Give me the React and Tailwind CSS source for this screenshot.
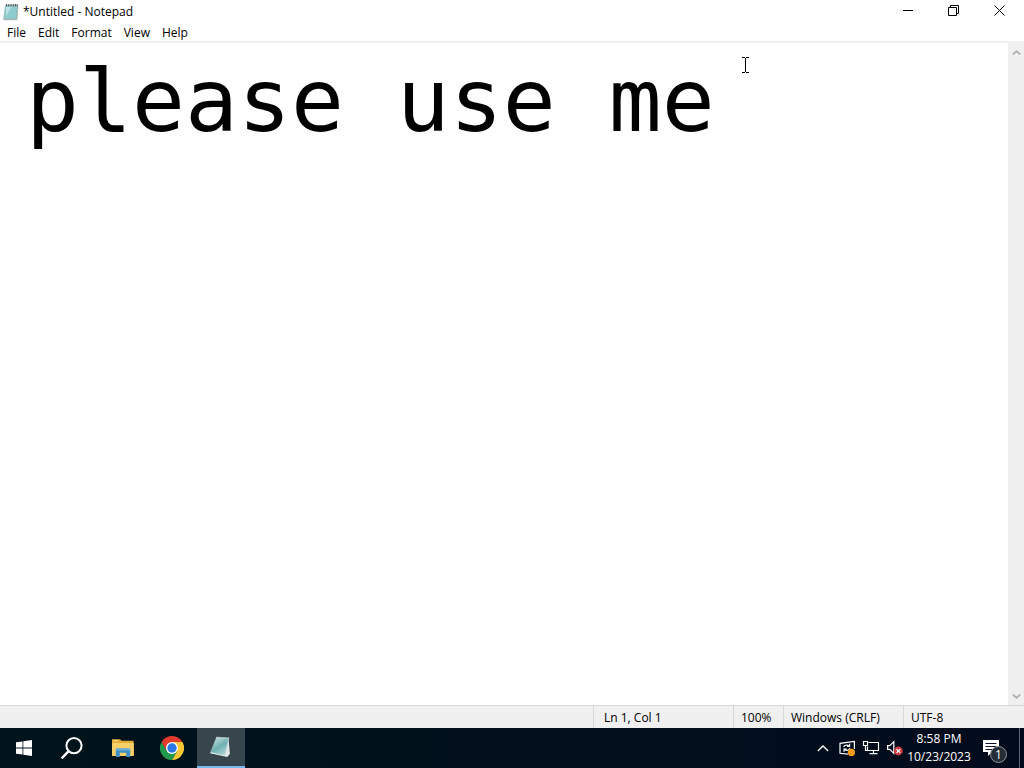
import { useState } from "react";

function NotepadIcon() {
  return (
    <svg className="block h-[18px] w-4" viewBox="0 0 16 18" aria-hidden="true">
      <path d="M2.4 2.5h12.1l-1 13.8H.8z" fill="#9fd0d2" stroke="#6f9ba0" strokeWidth=".6" />
      <path d="M2.8 4h11l-1 11H1.6z" fill="#8ecbcf" />
      <path d="M3 4h5.600L3 13z" fill="#b9e2e2" />
      <path d="M14.5 3l.6.6-1 13.2H1.2l-.4-.6h12.5z" fill="#d6e3e3" stroke="#7f9494" strokeWidth=".4" />
      <path d="M3.5 1v2.4M5.3 1v2.4M7.1 1v2.4M8.900 1v2.4M10.7 1v2.4M12.5 1v2.4M14.2 1v2.4" stroke="#4a5558" strokeWidth=".9" />
    </svg>
  );
}

function StartIcon() {
  return (
    <svg className="block size-4" viewBox="0 0 16 16" fill="#fff" aria-hidden="true">
      <path d="M0 2.3l6.5-.9v6.1H0zM7.3 1.2L16 0v7.5H7.3zM0 8.4h6.5v6.2L0 13.7zM7.3 8.4H16V16l-8.7-1.2z" />
    </svg>
  );
}

function SearchIcon() {
  return (
    <svg className="block size-6" viewBox="0 0 24 24" fill="none" stroke="#fff" strokeWidth="2" aria-hidden="true">
      <circle cx="14" cy="9.6" r="7.6" />
      <path d="M8.7 15.2L1.6 22.3" strokeWidth="2.4" />
    </svg>
  );
}

function FolderIcon() {
  return (
    <svg className="block h-5 w-[22px]" viewBox="0 0 22 20" aria-hidden="true">
      <path d="M0 1.2h8l1.4 1.6H21a.6.6 0 0 1 .6.6V17H0z" fill="#e6ad35" />
      <path d="M1.6 2.2h4.2v1H1.6z" fill="#f7e3a0" />
      <path d="M0 5h21.8v12.4a.6.6 0 0 1-.6.6H.6a.6.6 0 0 1-.6-.6z" fill="#f5cf69" />
      <path d="M5 10.4h12a1.2 1.2 0 0 1 1.2 1.2V19h-4v-4.2H7.8V19h-4v-7.4A1.2 1.2 0 0 1 5 10.4z" fill="#3f8fc6" />
      <path d="M5 10.4h12a1.2 1.2 0 0 1 1.2 1.2v.8H3.8v-.8A1.2 1.2 0 0 1 5 10.4z" fill="#6bb2dd" />
    </svg>
  );
}

function ChromeIcon() {
  return (
    <svg className="block size-6" viewBox="0 0 48 48" aria-hidden="true">
      <path d="M24 12H44.8A24 24 0 0 1 24 48L34.4 30z" fill="#fcc934" />
      <path d="M13.6 30L3.2 12A24 24 0 0 0 24 48L34.4 30z" fill="#219a4c" />
      <path d="M24 12h20.8A24 24 0 0 0 3.2 12l10.4 18z" fill="#e33b2e" />
      <circle cx="24" cy="24" r="12" fill="#fff" />
      <circle cx="24" cy="24" r="9.4" fill="#2b78e4" />
    </svg>
  );
}

function NotepadLargeIcon() {
  return (
    <svg className="block h-[22px] w-6" viewBox="0 0 24 22" aria-hidden="true">
      <defs>
        <linearGradient id="cover" x1=".2" y1="0" x2=".8" y2="1">
          <stop offset="0" stopColor="#c3dfdf" />
          <stop offset=".5" stopColor="#6fb0b2" />
          <stop offset="1" stopColor="#b5dcdc" />
        </linearGradient>
      </defs>
      <path d="M19.5 2l1.4 16-2.4 2.6-5-1z" fill="#dfe7e7" />
      <path d="M7.5 1.6l12.3.6-4.4 17.4L1.6 16.4z" fill="url(#cover)" stroke="#a9c8ca" strokeWidth=".6" />
      <path d="M1.6 16.2l13.8 3.2 3.4.8-.4.8L1.2 17.3z" fill="#eef5f5" />
      <path d="M7.5 1.4l12.6.6" stroke="#dfe7e7" strokeWidth="1.4" strokeDasharray="1 1" />
    </svg>
  );
}

function UpdateIcon() {
  return (
    <svg className="block size-[18px]" viewBox="0 0 18 18" fill="none" stroke="#fff" strokeWidth="1.2" aria-hidden="true">
      <path d="M10 15.2L2 14.3v-10L16.4 2.4V10" />
      <path d="M5.7 8.2c.4-2 3.4-2.8 5.3-1.2M11.6 4.8v2.5H9M11.9 9.2c-.5 2.1-3.4 3-5.3 1.3M6 12.8v-2.6h2.6" />
      <circle cx="13.4" cy="13.4" r="3.6" fill="#f39a1d" stroke="none" />
    </svg>
  );
}

function NetworkIcon() {
  return (
    <svg className="block size-[18px]" viewBox="0 0 18 18" fill="none" stroke="#fff" strokeWidth="1.2" aria-hidden="true">
      <path d="M6.5 3.5h10v8h-11v-4" />
      <path d="M1.5 2.5h4v4h-4zM3.5 6.5v5H6M11.500 11.500v3M7.500 14.600h8" />
    </svg>
  );
}

function VolumeIcon() {
  return (
    <svg className="block size-[18px]" viewBox="0 0 18 18" fill="none" stroke="#fff" strokeWidth="1.2" aria-hidden="true">
      <path d="M1.6 6.6h2.2l4-4v11.8l-4-4H1.6z" />
      <circle cx="12.4" cy="12" r="4.4" fill="#cf3d43" stroke="none" />
      <path d="M10.5 10.1l3.8 3.8M14.3 10.1l-3.8 3.8" strokeWidth="1.3" />
    </svg>
  );
}

function Chevron({ className, d }) {
  return (
    <svg className={className} viewBox="0 0 14 8" fill="none" stroke="currentColor" aria-hidden="true">
      <path d={d} />
    </svg>
  );
}

function NotificationIcon() {
  return (
    <svg className="block h-[30px] w-6" viewBox="0 0 24 30" aria-hidden="true">
      <path d="M0 7h16v12H9l-4 4v-4H0z" fill="#fff" />
      <path d="M2.5 10.5h11M2.5 13.5h11M2.5 16.5h7" stroke="#0a1420" />
      <circle cx="15.5" cy="21.5" r="8" fill="#252d37" stroke="#8f959b" />
    </svg>
  );
}

const menus = ["File", "Edit", "Format", "View", "Help"];

export default function App() {
  const [text, setText] = useState("please use me");
  return (
    <div className="flex h-screen flex-col bg-white font-['Open_Sans','Noto_Sans',sans-serif] text-xs text-black">
      <header className="flex h-6 shrink-0 items-start">
        <div className="flex h-6 flex-1 items-center gap-1 pl-[3px]">
          <NotepadIcon />
          <h1>*Untitled - Notepad</h1>
        </div>
        <div className="flex h-5 pr-0.5">
          <button aria-label="Minimize" className="flex w-[45px] items-center justify-center">
            <svg className="size-[11px]" viewBox="0 0 11 11" stroke="#000" aria-hidden="true"><path d="M0 5.5h10" /></svg>
          </button>
          <button aria-label="Restore" className="flex w-[45px] items-center justify-center">
            <svg className="size-[11px]" viewBox="0 0 11 11" fill="none" stroke="#000" aria-hidden="true"><path d="M.5 2.5h8v8h-8zM2.5 2V.5h8v8H9" /></svg>
          </button>
          <button aria-label="Close" className="flex w-[46px] items-center justify-center">
            <svg className="size-[11px]" viewBox="0 0 11 11" stroke="#000" aria-hidden="true"><path d="M.5.5l10 10M10.5.5l-10 10" /></svg>
          </button>
        </div>
      </header>
      <nav className="flex h-[19px] shrink-0 border-b-2 border-[#f0f0f0] pl-px">
        {menus.map((m) => (
          <button key={m} className="px-1.5 leading-4">{m}</button>
        ))}
      </nav>

      <main className="flex min-h-0 flex-1">
        <div className="relative flex min-w-0 flex-1">
          <textarea
            aria-label="Document"
            spellCheck={false}
            value={text}
            onChange={(e) => setText(e.target.value)}
            className="flex-1 resize-none overflow-hidden pt-1.5 pl-[26px] font-['DejaVu_Sans_Mono',monospace] text-[88px] leading-[104px] outline-none"
          />
          <svg className="absolute top-[14px] left-[742px] h-4 w-[7px]" viewBox="0 0 7 16" fill="none" stroke="#000" aria-hidden="true">
            <path d="M0 .5h3M4 .5h3M3.5 1v14M0 15.5h3M4 15.5h3" />
          </svg>
        </div>
        <div className="flex w-4 shrink-0 flex-col justify-between bg-[#f0f0f0] text-[#b0b0b0]">
          <button aria-label="Scroll up" className="flex h-[18px] items-center justify-center">
            <Chevron className="h-[5px] w-[9px] stroke-[3]" d="M1 7l6-5 6 5" />
          </button>
          <button aria-label="Scroll down" className="flex h-[18px] items-center justify-center">
            <Chevron className="h-[5px] w-[9px] stroke-[3]" d="M1 1l6 5 6-5" />
          </button>
        </div>
      </main>

      <footer className="flex h-[23px] shrink-0 justify-end border-t border-[#d7d7d7] bg-[#f0f0f0] leading-6">
        <span className="w-[140px] border-l border-[#d7d7d7] pl-[10px]">Ln 1, Col 1</span>
        <span className="w-[50px] border-l border-[#d7d7d7] pl-[7px]">100%</span>
        <span className="w-[120px] border-l border-[#d7d7d7] pl-[7px]">Windows (CRLF)</span>
        <span className="w-[121px] border-l border-[#d7d7d7] pl-[7px]">UTF-8</span>
      </footer>

      <div className="flex h-10 shrink-0 justify-between bg-linear-to-r from-[#00141b] to-[#010b1c] text-white">
        <div className="flex">
          <button aria-label="Start" className="flex w-12 items-center justify-center"><StartIcon /></button>
          <button aria-label="Search" className="flex w-12 items-center justify-center"><SearchIcon /></button>
          <div className="flex gap-px pl-[3px]">
            <button aria-label="File Explorer" className="flex w-12 items-center justify-center"><FolderIcon /></button>
            <button aria-label="Google Chrome" className="flex w-12 items-center justify-center"><ChromeIcon /></button>
            <button aria-label="Notepad" className="flex w-12 items-center justify-center border-b-2 border-[#76b9ed] bg-[#37464c]"><NotepadLargeIcon /></button>
          </div>
        </div>
        <div className="flex">
          <button aria-label="Show hidden icons" className="flex w-6 items-center justify-center">
            <Chevron className="h-[7px] w-3 stroke-[1.5]" d="M1 7l6-6 6 6" />
          </button>
          <button aria-label="Updates" className="flex w-6 items-center justify-center"><UpdateIcon /></button>
          <button aria-label="Network" className="flex w-6 items-center justify-center"><NetworkIcon /></button>
          <button aria-label="Volume" className="flex w-6 items-center justify-center"><VolumeIcon /></button>
          <button className="flex w-16 flex-col items-center justify-center leading-[18px] whitespace-nowrap">
            <span>8:58 PM</span>
            <span>10/23/2023</span>
          </button>
          <button aria-label="Notifications" className="relative flex w-12 items-center justify-center">
            <NotificationIcon />
            <span className="absolute top-[19px] left-6 leading-4">1</span>
          </button>
          <button aria-label="Show desktop" className="w-[5px] border-l border-[#5b6470]" />
        </div>
      </div>
    </div>
  );
}
